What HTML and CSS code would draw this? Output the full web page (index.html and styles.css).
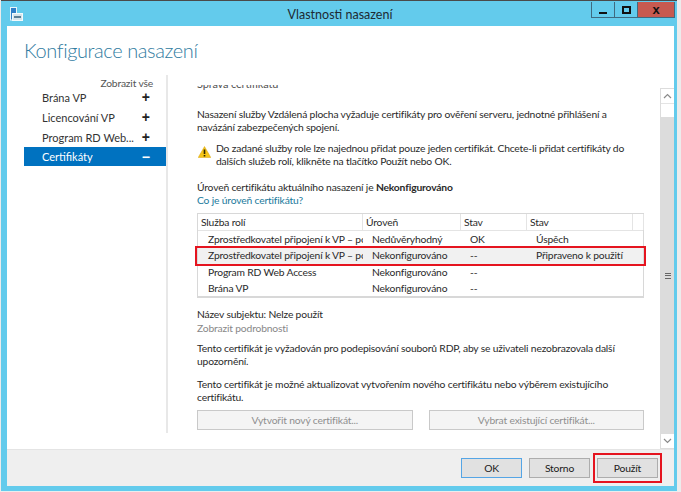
FILE: index.html
```html
<!DOCTYPE html>
<html lang="cs">
<head>
<meta charset="utf-8">
<title>Vlastnosti nasazení</title>
<link rel="stylesheet" href="styles.css">
</head>
<body>
<div class="window">
  <header class="titlebar">
    <svg class="app-icon" width="13" height="14" viewBox="0 0 13 14">
      <rect x="0.5" y="0.5" width="6" height="12.5" fill="#2f7fc8" stroke="#e8f6fb"/>
      <rect x="2.5" y="6.5" width="10" height="7" fill="#d8e4ea" stroke="#f2fafc"/>
      <rect x="4" y="9" width="7" height="2" fill="#5a7f96"/>
    </svg>
    <div class="title">Vlastnosti nasazení</div>
    <div class="controls">
      <div class="ctl"><span class="ctl-min"></span></div>
      <div class="ctl"><span class="ctl-max"></span></div>
      <div class="ctl ctl-close">x</div>
    </div>
  </header>
  <div class="client">
    <div class="body">
      <h1 class="heading">Konfigurace nasazení</h1>
      <div class="panes">
        <nav class="side">
          <div class="show-all">Zobrazit vše</div>
          <div class="nav-item"><span class="nav-label">Brána VP</span><span class="sign">+</span></div>
          <div class="nav-item"><span class="nav-label">Licencování VP</span><span class="sign">+</span></div>
          <div class="nav-item"><span class="nav-label">Program RD Web...</span><span class="sign">+</span></div>
          <div class="nav-item active"><span class="nav-label">Certifikáty</span><span class="sign">−</span></div>
        </nav>
        <main class="scrollarea">
          <div class="content">
            <div class="clipped"><span class="clipped-text">Správa certifikátů</span></div>
            <p class="para intro">Nasazení služby Vzdálená plocha vyžaduje certifikáty pro ověření serveru, jednotné přihlášení a<br>navázání zabezpečených spojení.</p>
            <div class="warn">
              <svg class="warn-icon" width="13" height="12" viewBox="0 0 13 12">
                <path d="M6.5 0.5 L12.8 11.5 H0.2 Z" fill="#f5c518" stroke="#d9a514" stroke-width="0.5"/>
                <rect x="5.7" y="3.5" width="1.6" height="4.5" fill="#2e2600"/>
                <rect x="5.7" y="9" width="1.6" height="1.5" fill="#2e2600"/>
              </svg>
              <p class="para">Do zadané služby role lze najednou přidat pouze jeden certifikát. Chcete-li přidat certifikáty do<br>dalších služeb rolí, klikněte na tlačítko Použít nebo OK.</p>
            </div>
            <p class="para level">Úroveň certifikátu aktuálního nasazení je <b>Nekonfigurováno</b><br><span class="link">Co je úroveň certifikátu?</span></p>
            <div class="table">
              <div class="row head">
                <div class="cell">Služba rolí</div><div class="cell">Úroveň</div><div class="cell">Stav</div><div class="cell">Stav</div><div class="cell"></div>
              </div>
              <div class="row">
                <div class="cell">Zprostředkovatel připojení k VP – podepisování</div><div class="cell">Nedůvěryhodný</div><div class="cell">OK</div><div class="cell">Úspěch</div><div class="cell"></div>
              </div>
              <div class="row selected">
                <div class="cell">Zprostředkovatel připojení k VP – podepisování</div><div class="cell">Nekonfigurováno</div><div class="cell">--</div><div class="cell">Připraveno k použití</div><div class="cell"></div>
                <div class="redbox"></div>
              </div>
              <div class="row">
                <div class="cell">Program RD Web Access</div><div class="cell">Nekonfigurováno</div><div class="cell">--</div><div class="cell"></div><div class="cell"></div>
              </div>
              <div class="row">
                <div class="cell">Brána VP</div><div class="cell">Nekonfigurováno</div><div class="cell">--</div><div class="cell"></div><div class="cell"></div>
              </div>
            </div>
            <p class="para subject">Název subjektu: Nelze použít<br><span class="muted">Zobrazit podrobnosti</span></p>
            <p class="para p-sign">Tento certifikát je vyžadován pro podepisování souborů RDP, aby se uživateli nezobrazovala další<br>upozornění.</p>
            <p class="para p-renew">Tento certifikát je možné aktualizovat vytvořením nového certifikátu nebo výběrem existujícího<br>certifikátu.</p>
            <div class="cert-buttons">
              <div class="cert-btn">Vytvořit nový certifikát...</div>
              <div class="cert-btn">Vybrat existující certifikát...</div>
            </div>
          </div>
          <div class="scrollbar">
            <div class="arrow">
              <svg width="9" height="6" viewBox="0 0 9 6"><path d="M1 5 L4.5 1.5 L8 5" fill="none" stroke="#8a8a8a" stroke-width="1.2"/></svg>
            </div>
            <div class="track-a"></div>
            <div class="thumb"><span class="grip"></span></div>
            <div class="arrow">
              <svg width="9" height="6" viewBox="0 0 9 6"><path d="M1 1 L4.5 4.5 L8 1" fill="none" stroke="#8a8a8a" stroke-width="1.2"/></svg>
            </div>
          </div>
        </main>
      </div>
    </div>
    <footer class="footer">
      <div class="btn btn-default">OK</div>
      <div class="btn">Storno</div>
      <div class="btn btn-apply">Použít<span class="redbox-btn"></span></div>
    </footer>
  </div>
</div>
</body>
</html>
```
FILE: styles.css
```css
* { box-sizing: border-box; }
html, body { margin: 0; height: 100%; }
body {
  background: #ececec;
  font-family: "Lato", "Open Sans", sans-serif;
  font-size: 10.3px;
  letter-spacing: -0.17px;
  color: #2a2a2a;
  overflow: hidden;
}
.window {
  width: 676px;
  height: 491px;
  margin-left: 1px;
  padding-top: 1px;
  background: #63cbec;
  border-top: 1px solid #4a4a4a;
  display: flex;
  flex-direction: column;
}
.titlebar {
  height: 24px;
  flex: none;
  display: flex;
  align-items: center;
  position: relative;
  padding-left: 9px;
}
.title {
  position: absolute;
  left: 0;
  right: 0;
  text-align: center;
  font-size: 12.5px;
  letter-spacing: 0;
  padding-left: 2px;
  color: #1d2a33;
}
.controls {
  margin-left: auto;
  margin-top: -8px;
  margin-right: 2px;
  height: 16px;
  display: flex;
  position: relative;
  border: 1px solid #3f6a80;
  border-top: 0;
}
.ctl {
  width: 23px;
  display: flex;
  align-items: center;
  justify-content: center;
  border-right: 1px solid #3f6a80;
}
.ctl-min { width: 8px; height: 2px; background: #111; margin-top: 6px; }
.ctl-max { width: 9px; height: 8px; border: 2px solid #111; }
.ctl-close {
  width: 36px;
  border-right: 0;
  background: #c75a50;
  color: #111;
  font: bold 13px "Liberation Sans", sans-serif;
}
.client {
  flex: 1;
  margin: 0 3px 5px 6px;
  background: #fff;
  display: flex;
  flex-direction: column;
}
.body { flex: 1; display: flex; flex-direction: column; min-height: 0; }
.heading {
  margin: 0;
  padding: 12px 0 0 17px;
  height: 49px;
  font-family: "Lato", sans-serif;
  font-weight: 300;
  font-size: 20px;
  letter-spacing: -0.4px;
  color: #2f7ba0;
}
.panes { flex: 1; display: flex; min-height: 0; }
.side {
  width: 161px;
  padding-left: 17px;
  border-right: 2px solid #e8e8e8;
  margin-bottom: 16px;
}
.show-all { text-align: right; padding-right: 13px; color: #555; height: 13px; line-height: 16px; }
.nav-item {
  height: 20px;
  display: flex;
  align-items: center;
  justify-content: space-between;
  padding: 0 16px 0 18px;
  font-size: 11px;
  letter-spacing: 0;
  color: #333;
}
.show-all + .nav-item { margin-top: -1px; }
.sign { font: bold 14px "Liberation Sans", sans-serif; color: #222; }
.nav-item.active { height: 19px; background: #0072c0; color: #fff; }
.nav-item.active .sign { color: #fff; }
.scrollarea { flex: 1; display: flex; min-width: 0; padding-top: 10px; overflow: hidden; }
.content { flex: 1; padding-left: 29px; padding-right: 15px; overflow: hidden; min-width: 0; }
.clipped { height: 5px; overflow: hidden; color: #555; font-size: 11px; }
.clipped-text { display: block; margin-top: -8px; line-height: 14px; }
.para { margin: 0; line-height: 13px; white-space: nowrap; }
.intro { margin-top: 18px; }
.warn { display: flex; gap: 5px; margin-top: 8px; margin-left: 1px; }
.warn-icon { flex: none; margin-top: 4px; }
.level { margin-top: 13px; }
.link { color: #1a7a9c; }
.table {
  margin-top: 6px;
  width: 447px;
  border: 1px solid #d8d8d8;
  border-bottom-width: 2px;
}
.row {
  display: grid;
  grid-template-columns: 165px 98px 66px 106px 11px;
  height: 16.3px;
  line-height: 16px;
  position: relative;
}
.cell { overflow: hidden; white-space: nowrap; padding-left: 9px; }
.cell:first-child { padding-left: 10px; }
.head { height: 17px; border-bottom: 1px solid #e4e4e4; }
.head .cell { padding-left: 3px; border-right: 1px solid #e4e4e4; }
.selected { background: #f1f1f1; }
.redbox {
  position: absolute;
  left: -3px;
  right: -3px;
  top: -1px;
  bottom: -2px;
  border: 2px solid #e5141f;
}
.subject { margin-top: 9px; line-height: 14px; }
.muted { color: #888; }
.p-sign { margin-top: 7px; }
.p-renew { margin-top: 10px; }
.cert-buttons { display: flex; gap: 16px; margin-top: 6px; width: 447px; }
.cert-btn {
  flex: 1;
  height: 20px;
  line-height: 18px;
  text-align: center;
  color: #8f8f8f;
  background: #f4f4f4;
  border: 1px solid #c9c9c9;
}
.scrollbar {
  width: 14px;
  flex: none;
  display: flex;
  flex-direction: column;
  margin-top: 3px;
  border: 1px solid #dcdcdc;
  border-right: 0;
}
.arrow { height: 14px; display: flex; align-items: center; justify-content: center; flex: none; background: #fff; }
.track-a { height: 14px; flex: none; border-top: 1px solid #e4e4e4; }
.thumb { flex: 1; background: #dcdcdc; display: flex; align-items: center; justify-content: center; }
.grip { width: 6px; height: 6px; border-top: 1px solid #666; border-bottom: 1px solid #666; background: linear-gradient(#666,#666) center/100% 1px no-repeat; }
.footer {
  height: 37px;
  flex: none;
  background: #efefef;
  border-top: 1px solid #e4e4e4;
  display: flex;
  justify-content: flex-end;
  align-items: center;
  gap: 7px;
  padding-right: 16px;
}
.btn {
  width: 61px;
  height: 20px;
  line-height: 18px;
  text-align: center;
  background: #e1e1e1;
  border: 1px solid #adadad;
  color: #1a1a1a;
  position: relative;
}
.btn-default { border: 1px solid #55a5e5; }
.redbox-btn {
  position: absolute;
  left: -5px;
  right: -5px;
  top: -6px;
  bottom: -6px;
  border: 2px solid #e5141f;
}
```
